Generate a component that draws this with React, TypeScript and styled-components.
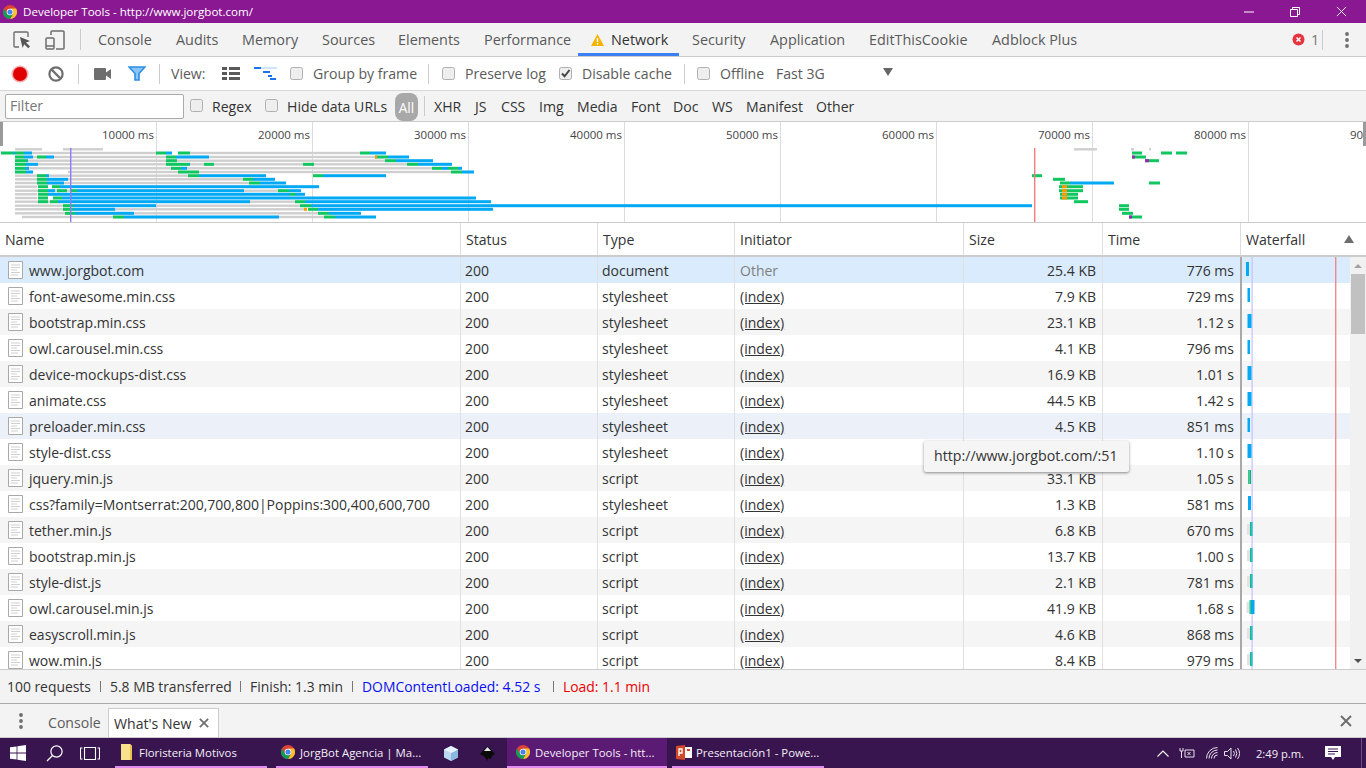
import React from "react";
import styled, { createGlobalStyle } from "styled-components";

const Global = createGlobalStyle`
  html, body { margin: 0; padding: 0; height: 100%; overflow: hidden; background: #f3f3f3; }
  * { box-sizing: border-box; }
  body { font-family: "Open Sans", "Noto Sans", Arial, sans-serif; font-size: 14px; color: #333; }
`;

const COLS = "461px 137px 137px 229px 139px 138px 1fr";

const Page = styled.div`
  width: 1366px; height: 768px; display: flex; flex-direction: column; overflow: hidden; position: relative;
`;
const TitleBar = styled.div`
  height: 23px; flex: none; background: #8a1892; color: #fff; display: flex; align-items: center;
  padding: 0 2px 0 3px; font-size: 11.6px; gap: 6px;
`;
const TitleText = styled.span` flex: 1; letter-spacing: -0.02px; `;
const WinButton = styled.div`
  width: 46px; height: 23px; margin-left: -6px; display: flex; align-items: center; justify-content: center;
`;
const TabBar = styled.div`
  height: 34px; flex: none; background: #f3f3f3; border-bottom: 1px solid #ccc; display: flex; align-items: center;
`;
const IconSlot = styled.div<{ $w: number }>`
  width: ${p => p.$w}px; flex: none; display: flex; align-items: center; justify-content: center; height: 100%;
`;
const VDivider = styled.div<{ $h?: number; $c?: string }>`
  width: 1px; height: ${p => p.$h ?? 20}px; background: ${p => p.$c ?? "#ccc"}; flex: none;
`;
const Tab = styled.div<{ $w: number; $active?: boolean }>`
  width: ${p => p.$w}px; flex: none; height: 33px; display: flex; align-items: center; gap: 7px; padding-left: 13px;
  font-size: 14.4px; color: ${p => (p.$active ? "#333" : "#5a5a5a")}; white-space: nowrap;
  border-bottom: ${p => (p.$active ? "3px solid #3a80f0" : "0")}; padding-top: ${p => (p.$active ? "3px" : "0")};
`;
const Grow = styled.div` flex: 1; `;
const ErrBadge = styled.div`
  display: flex; align-items: center; gap: 6px; font-size: 14.4px; color: #777; width: 30px; flex: none;
`;
const Toolbar = styled.div`
  height: 34px; flex: none; background: #fff; border-bottom: 1px solid #d6d6d6; display: flex; align-items: center;
`;
const ToolItem = styled.div<{ $w: number; $ml?: number }>`
  width: ${p => p.$w}px; margin-left: ${p => p.$ml ?? 0}px; flex: none; display: flex; align-items: center; gap: 10px;
  font-size: 14.1px; color: #5a5a5a; white-space: nowrap;
`;
const Check = styled.span`
  width: 13px; height: 13px; flex: none; border: 1px solid #b0b0b0; border-radius: 2.5px; background: #eeeeee;
  display: inline-flex; align-items: center; justify-content: center; margin-top: -1px;
`;
const FilterBar = styled.div`
  height: 31px; flex: none; background: #f3f3f3; border-bottom: 1px solid #ccc; display: flex; align-items: center; padding-left: 5px;
`;
const FilterInput = styled.div`
  width: 179px; height: 25px; background: #fff; border: 1px solid #aaa; border-radius: 2px; color: #777;
  font-size: 14.1px; padding-left: 4px; line-height: 22px; flex: none;
`;
const FilterCheck = styled.div<{ $w: number; $ml: number }>`
  width: ${p => p.$w}px; margin-left: ${p => p.$ml}px; flex: none; display: flex; align-items: center; gap: 9px;
  font-size: 14.1px; color: #333; white-space: nowrap;
`;
const AllPill = styled.div`
  width: 23px; height: 28px; margin-left: 8px; background: #a8a8a8; color: #fff; border-radius: 8px; display: flex;
  align-items: center; justify-content: center; font-size: 13.7px; flex: none; align-self: flex-end;
`;
const TypeChip = styled.div<{ $w: number }>`
  width: ${p => p.$w}px; flex: none; font-size: 14.1px; color: #333; white-space: nowrap; padding-top: 1px;
`;
const Overview = styled.div`
  height: 101px; flex: none; background: #fff; position: relative; overflow: hidden; border-bottom: 1px solid #ccc; display: flex; padding-left: 1px;
`;
const TickCell = styled.div`
  width: 156px; flex: none; border-right: 1px solid #ddd; text-align: right; padding: 5px 2px 0 0; font-size: 11.5px; color: #444;
  white-space: nowrap;
`;
const Handle = styled.div<{ $right?: boolean }>`
  position: absolute; top: 0; width: 3px; height: 24px; background: #9a9a9a;
  ${p => (p.$right ? "right: 0;" : "left: 0;")}
`;
const OverviewChart = styled.svg` position: absolute; left: 0; top: 0; `;
const HeaderRow = styled.div`
  height: 34px; flex: none; display: grid; grid-template-columns: ${COLS}; background: #fff; border-bottom: 2px solid #ccc;
`;
const HeadCell = styled.div<{ $last?: boolean }>`
  display: flex; align-items: center; justify-content: space-between; padding: 0 12px 0 5px; font-size: 14.1px; color: #333;
  border-right: ${p => (p.$last ? "0" : "1px solid #ddd")};
`;
const Table = styled.div`
  height: 412px; flex: none; display: flex; background: #fff;
`;
const RowsArea = styled.div`
  width: 1350px; flex: none; overflow: hidden; position: relative;
`;
const Row = styled.div<{ $bg: string }>`
  height: 26px; display: grid; grid-template-columns: ${COLS}; background: ${p => p.$bg};
`;
const Cell = styled.div<{ $right?: boolean; $last?: boolean; $muted?: boolean; $link?: boolean }>`
  display: flex; align-items: center; justify-content: ${p => (p.$right ? "flex-end" : "flex-start")};
  padding: 0 6px 0 ${p => (p.$link || p.$muted ? 5 : 4)}px;
  font-size: 14px; color: ${p => (p.$muted ? "#808080" : "#333")}; white-space: nowrap; overflow: hidden;
  border-right: ${p => (p.$last ? "0" : "1px solid #e0e0e0")};
  text-decoration: ${p => (p.$link ? "underline" : "none")};
`;
const NameCell = styled(Cell)` gap: 6px; padding-left: 8px; `;
const WaterfallSvg = styled.svg` position: absolute; left: 1240px; top: 0; `;
const Scrollbar = styled.div`
  width: 16px; flex: none; background: #f1f1f1; display: flex; flex-direction: column; align-items: center; justify-content: space-between;
  position: relative; padding: 7px 0 6px;
`;
const Thumb = styled.div`
  position: absolute; top: 17px; left: 1px; width: 14px; height: 60px; background: #c1c1c1;
`;
const Arrow = styled.div<{ $down?: boolean }>`
  width: 0; height: 0; border-left: 4px solid transparent; border-right: 4px solid transparent;
  ${p => (p.$down ? "border-top: 4px solid #505050;" : "border-bottom: 4px solid #a3a3a3;")}
`;
const Tooltip = styled.div`
  position: absolute; left: 924px; top: 441px; width: 205px; height: 31px; background: #f5f5f5; border-radius: 2px;
  box-shadow: 0 1px 3px rgba(0,0,0,.45); color: #333; font-size: 14.2px; padding-left: 10px; line-height: 30px; white-space: nowrap;
`;
const StatusBar = styled.div`
  height: 35px; flex: none; background: #f3f3f3; border-top: 1px solid #ccc; border-bottom: 1px solid #aaa; display: flex;
  align-items: center; padding-left: 7px; font-size: 13.9px; color: #333;
`;
const StatusText = styled.span<{ $w: number; $c?: string }>`
  width: ${p => p.$w}px; flex: none; color: ${p => p.$c ?? "#333"}; white-space: nowrap;
`;
const Sep = styled.span`
  width: 1px; height: 11px; background: #777; flex: none; margin-right: 9px;
`;
const Drawer = styled.div`
  height: 34px; flex: none; background: #f3f3f3; border-bottom: 1px solid #ccc; display: flex; align-items: flex-end;
`;
const DrawerTab = styled.div<{ $active?: boolean; $w: number }>`
  width: ${p => p.$w}px; flex: none; height: 29px; display: flex; align-items: center; padding-left: ${p => (p.$active ? 5 : 6)}px; gap: 8px;
  font-size: 14.1px; white-space: nowrap;
  background: ${p => (p.$active ? "#fff" : "transparent")}; color: ${p => (p.$active ? "#333" : "#5a5a5a")};
  border: ${p => (p.$active ? "1px solid #ccc" : "0")}; border-bottom: 0;
`;
const DrawerClose = styled.div`
  width: 40px; flex: none; height: 33px; display: flex; align-items: center; justify-content: center;
`;
const Taskbar = styled.div`
  height: 30px; flex: none; background: #38154f; color: #fff; display: flex; align-items: center; font-size: 11.4px;
`;
const TaskItem = styled.div<{ $w: number; $ml: number; $pl?: number; $gap?: number; $active?: boolean }>`
  width: ${p => p.$w}px; margin-left: ${p => p.$ml}px; flex: none; height: 30px; display: flex; align-items: center;
  gap: ${p => p.$gap ?? 5}px; padding-left: ${p => p.$pl ?? 5}px;
  background: ${p => (p.$active ? "#5b1a74" : "transparent")}; border-bottom: 2px solid #e28cef; white-space: nowrap; overflow: hidden; color: #f4eef6;
`;
const TrayIcon = styled.div<{ $w: number; $ml?: number }>`
  width: ${p => p.$w}px; margin-left: ${p => p.$ml ?? 0}px; flex: none; height: 30px; display: flex; align-items: center; justify-content: center;
`;
const Clock = styled.div`
  width: 62px; margin-left: 7px; flex: none; text-align: center; font-size: 11.2px; color: #f4eef6; white-space: nowrap;
`;
const TaskEdge = styled.div`
  width: 5px; height: 30px; margin-left: 12px; flex: none; border-left: 1px solid #6a4a80;
`;

const Chrome = ({ s = 14 }: { s?: number }) => (
  <svg width={s} height={s} viewBox="0 0 24 24" style={{ flex: "none" }}>
    <circle cx="12" cy="12" r="12" fill="#db4437" />
    <path d="M12 24a12 12 0 0 0 10.4-18H12l5.2 9z" fill="#fbc02d" />
    <path d="M12 24l5.2-9L12 18a6 6 0 0 1-5.2-3L1.6 6A12 12 0 0 0 12 24z" fill="#0f9d58" />
    <circle cx="12" cy="12" r="5.6" fill="#fff" />
    <circle cx="12" cy="12" r="4.4" fill="#4285f4" />
  </svg>
);
const PageIcon = () => (
  <svg width="15" height="18" viewBox="0 0 15 18" style={{ flex: "none" }}>
    <path d="M.5.5h14v17H.5z" fill="#fff" stroke="#a9a9a9" />
    <path d="M3 4h9M3 6.5h9M3 9h6M3 11.5h9M3 14h7" stroke="#cfcfcf" strokeWidth="1.2" />
  </svg>
);
const CheckMark = () => (
  <svg width="11" height="11" viewBox="0 0 11 11"><path d="M2 5.5l2.6 2.8L9.5 2" fill="none" stroke="#444" strokeWidth="2" /></svg>
);
const CloseX = ({ s = 12, c = "#6e6e6e", w = 2 }: { s?: number; c?: string; w?: number }) => (
  <svg width={s} height={s} viewBox="0 0 12 12"><path d="M1 1l10 10M11 1L1 11" stroke={c} strokeWidth={w} /></svg>
);
const Dots = () => (
  <svg width="4" height="16" viewBox="0 0 4 16" fill="#6e6e6e"><circle cx="2" cy="2" r="1.9" /><circle cx="2" cy="8" r="1.9" /><circle cx="2" cy="14" r="1.9" /></svg>
);

const TABS: [string, number][] = [
  ["Console", 78], ["Audits", 66], ["Memory", 80], ["Sources", 76], ["Elements", 86], ["Performance", 107],
];
const TABS2: [string, number][] = [
  ["Security", 78], ["Application", 99], ["EditThisCookie", 123], ["Adblock Plus", 140],
];
const TYPES: [string, number][] = [
  ["XHR", 41], ["JS", 26], ["CSS", 38], ["Img", 38], ["Media", 54], ["Font", 42], ["Doc", 39], ["WS", 34], ["Manifest", 70], ["Other", 50],
];
const ROWS: [string, string, string, string, string][] = [
  ["www.jorgbot.com", "document", "Other", "25.4 KB", "776 ms"],
  ["font-awesome.min.css", "stylesheet", "(index)", "7.9 KB", "729 ms"],
  ["bootstrap.min.css", "stylesheet", "(index)", "23.1 KB", "1.12 s"],
  ["owl.carousel.min.css", "stylesheet", "(index)", "4.1 KB", "796 ms"],
  ["device-mockups-dist.css", "stylesheet", "(index)", "16.9 KB", "1.01 s"],
  ["animate.css", "stylesheet", "(index)", "44.5 KB", "1.42 s"],
  ["preloader.min.css", "stylesheet", "(index)", "4.5 KB", "851 ms"],
  ["style-dist.css", "stylesheet", "(index)", "", "1.10 s"],
  ["jquery.min.js", "script", "(index)", "33.1 KB", "1.05 s"],
  ["css?family=Montserrat:200,700,800|Poppins:300,400,600,700", "stylesheet", "(index)", "1.3 KB", "581 ms"],
  ["tether.min.js", "script", "(index)", "6.8 KB", "670 ms"],
  ["bootstrap.min.js", "script", "(index)", "13.7 KB", "1.00 s"],
  ["style-dist.js", "script", "(index)", "2.1 KB", "781 ms"],
  ["owl.carousel.min.js", "script", "(index)", "41.9 KB", "1.68 s"],
  ["easyscroll.min.js", "script", "(index)", "4.6 KB", "868 ms"],
  ["wow.min.js", "script", "(index)", "8.4 KB", "979 ms"],
];
const rowBg = (i: number) =>
  i === 0 ? "#d9ebfc" : i === 6 ? "#ecf1f9" : i % 2 === 0 ? "#f5f5f5" : "#ffffff";

const OV: [number, string][] = [
  [149.3, "a15-42 a63-103 a1074-1097 a1131-1134 a1149-1151"],
  [153, "g1-13 b13-15 a15-156 g15-24 b24-32 g156-166 b166-172 g178-190 a190-360 g360-370 b370-386 g1132-1142 g1161-1172 g1176-1187"],
  [157, "a15-375 g15-24 b24-33 g37-46 b46-54 g166-176 b176-209 g375-388 o375-377 b388-409 g1132-1146 p1132-1135"],
  [160.7, "a15-385 g15-27 b27-28 g166-177 g385-396 b396-433 g1145-1159 p1145-1149"],
  [164.3, "a15-407 g15-26 b26-38 g166-178 g178-189 b189-190 g204-214 g303-314 g407-418 b418-452"],
  [168.3, "a15-432 g15-25 b25-29 g171-181 b181-187 g432-442 b442-448 g448-458 b458-462"],
  [172, "a68-451 g15-26 b26-33 g178-188 g188-199 g451-462 b462-474"],
  [175.7, "a15-188 g37-46 b46-49 g188-199 b199-266 g313-323 b323-386 g1032-1042"],
  [179.3, "a15-243 g37-47 b47-68 g243-253 b253-275 g1053-1065"],
  [183, "a15-249 g37-47 b47-64 g249-260 b260-286 g1060-1070 b1070-1114 g1149-1160"],
  [186.7, "a15-37 g38-48 g52-60 b60-319 g1059-1083 o1062-1067"],
  [190.7, "a15-278 g38-48 b48-55 g57-67 g70-77 b77-244 g278-289 b289-301 g1059-1083 o1062-1067"],
  [194.3, "a15-37 g38-48 b48-290 g290-295 b295-305 g1060-1078 o1062-1067"],
  [198, "a15-37 g38-48 g53-62 b62-476 g1060-1078 o1062-1067"],
  [201.7, "a15-295 g38-48 g50-58 b58-250 g295-305 b305-491 g1074-1088"],
  [205.7, "a15-300 g63-73 b73-156 g300-311 b311-1032 g1119-1129"],
  [209.3, "a15-304 g63-73 b73-115 o304-307 g308-318 b318-493 g1119-1129"],
  [213.3, "a15-318 g65-75 b75-134 g318-329 b329-361 g1122-1133"],
  [217, "a22-324 g113-124 b124-279 g324-335 b335-376 g1129-1142 p1129-1132"],
];
const OV_COL: Record<string, string> = { a: "#cfcfcf", g: "#0fc65f", b: "#03a9f4", o: "#ff9800", p: "#9c27b0" };

const WF: [number, number, string?][] = [
  [6, 3], [7.5, 2.5], [7.5, 4], [7.5, 2.5], [7.5, 4], [7.5, 4], [7.5, 2.5], [7.5, 4], [8, 3, "m"], [8, 3],
  [10, 2.5, "g"], [10, 2.5, "g"], [10, 2.5, "g"], [9.5, 5, "g"], [10, 2.5, "g"], [10, 2.5, "g"],
];

export default function App() {
  return (
    <Page>
      <Global />
      <TitleBar>
        <Chrome />
        <TitleText>Developer Tools - http://www.jorgbot.com/</TitleText>
        <WinButton><svg width="10" height="2"><path d="M0 1h10" stroke="#fff" /></svg></WinButton>
        <WinButton><svg width="10" height="10" fill="none" stroke="#fff"><path d="M.5 2.5h7v7h-7zM2.5 2.5v-2h7v7h-2" /></svg></WinButton>
        <WinButton><CloseX s={11} c="#fff" w={1} /></WinButton>
      </TitleBar>
      <TabBar>
        <IconSlot $w={39}>
          <svg width="19" height="18" viewBox="0 0 19 18" style={{ marginLeft: 5 }}>
            <path d="M6 16H2a1 1 0 0 1-1-1V2a1 1 0 0 1 1-1h12a1 1 0 0 1 1 1v4" fill="none" stroke="#6e6e6e" strokeWidth="1.4" />
            <path d="M7 6l10 4-4 1.4 4 4-1.8 1.8-4-4L9.6 17z" fill="#555" />
          </svg>
        </IconSlot>
        <IconSlot $w={31}>
          <svg width="20" height="20" viewBox="0 0 20 20" fill="none" stroke="#6e6e6e" strokeWidth="1.5">
            <path d="M6 5V2a1 1 0 0 1 1-1h11a1 1 0 0 1 1 1v16a1 1 0 0 1-1 1H11" />
            <rect x="1" y="8" width="8" height="11" rx="1" />
            <path d="M1 16h8" />
          </svg>
        </IconSlot>
        <IconSlot $w={15}><VDivider $h={21} style={{ marginLeft: 6 }} /></IconSlot>
        {TABS.map(([t, w]) => <Tab key={t} $w={w}>{t}</Tab>)}
        <Tab $w={101} $active>
          <svg width="13" height="12" viewBox="0 0 13 12" style={{ flex: "none" }}><path d="M6.5 0L13 12H0z" fill="#f4b400" /><path d="M6.5 4v4M6.5 9v1.6" stroke="#fff" strokeWidth="1.4" /></svg>
          Network
        </Tab>
        {TABS2.map(([t, w]) => <Tab key={t} $w={w}>{t}</Tab>)}
        <Grow />
        <ErrBadge>
          <svg width="13" height="13" viewBox="0 0 13 13" style={{ flex: "none" }}><circle cx="6.5" cy="6.5" r="6" fill="#e5343f" /><path d="M4.5 4.5l4 4M8.5 4.5l-4 4" stroke="#fff" strokeWidth="1.5" /></svg>
          1
        </ErrBadge>
        <VDivider $h={20} style={{ marginRight: 5 }} />
        <IconSlot $w={38}><Dots /></IconSlot>
      </TabBar>
      <Toolbar>
        <IconSlot $w={40}>
          <svg width="18" height="18" viewBox="0 0 18 18"><circle cx="9" cy="9" r="8.6" fill="#f3b0b0" /><circle cx="9" cy="9" r="7" fill="#e00000" /></svg>
        </IconSlot>
        <IconSlot $w={32}>
          <svg width="16" height="16" viewBox="0 0 16 16" fill="none" stroke="#6e6e6e" strokeWidth="2.2"><circle cx="8" cy="8" r="6.6" /><path d="M3.4 3.4l9.2 9.2" /></svg>
        </IconSlot>
        <IconSlot $w={12}><VDivider $h={20} /></IconSlot>
        <IconSlot $w={36}>
          <svg width="17" height="12" viewBox="0 0 17 12" fill="#6e6e6e"><rect x="0" y="0" width="12" height="12" rx="1" /><path d="M12 4.5L17 1v10l-5-3.5z" /></svg>
        </IconSlot>
        <IconSlot $w={34}>
          <svg width="18" height="15" viewBox="0 0 18 15"><path d="M1 1h16l-6 6.5V14H7V7.5z" fill="#8cc4f5" stroke="#2a8fe8" strokeWidth="1.6" /></svg>
        </IconSlot>
        <IconSlot $w={10}><VDivider $h={20} /></IconSlot>
        <ToolItem $w={50} $ml={7}>View:</ToolItem>
        <IconSlot $w={19}>
          <svg width="18" height="13" viewBox="0 0 18 13" fill="#5a5a5a"><path d="M0 0h5v3H0zM7 0h11v3H7zM0 5h5v3H0zM7 5h11v3H7zM0 10h5v3H0zM7 10h11v3H7z" /></svg>
        </IconSlot>
        <IconSlot $w={50}>
          <svg width="23" height="13" viewBox="0 0 23 13"><path d="M0 0h23v2H0z" fill="#cfe3fa" /><path d="M0 0h7v2H0zM9 4h7v2H9zM14 8h4v2h-4zM16 11h6v2h-6z" fill="#1a73e8" /></svg>
        </IconSlot>
        <ToolItem $w={138}><Check />Group by frame</ToolItem>
        <VDivider $h={20} />
        <ToolItem $w={117} $ml={13}><Check />Preserve log</ToolItem>
        <ToolItem $w={125}><Check><CheckMark /></Check>Disable cache</ToolItem>
        <VDivider $h={20} />
        <ToolItem $w={79} $ml={12}><Check />Offline</ToolItem>
        <ToolItem $w={107}>Fast 3G</ToolItem>
        <svg width="10" height="8" viewBox="0 0 10 8" style={{ marginTop: -3 }}><path d="M0 0h10L5 8z" fill="#666" /></svg>
      </Toolbar>
      <FilterBar>
        <FilterInput>Filter</FilterInput>
        <FilterCheck $w={75} $ml={6}><Check />Regex</FilterCheck>
        <FilterCheck $w={122} $ml={0}><Check />Hide data URLs</FilterCheck>
        <AllPill>All</AllPill>
        <VDivider $h={20} style={{ marginLeft: 6, marginRight: 9 }} />
        {TYPES.map(([t, w]) => <TypeChip key={t} $w={w}>{t}</TypeChip>)}
      </FilterBar>
      <Overview>
        {[1, 2, 3, 4, 5, 6, 7, 8, 9].map(n => <TickCell key={n}>{n}0000 ms</TickCell>)}
        <OverviewChart width="1366" height="100" viewBox="0 122 1366 100">
          {OV.flatMap(([y, s], i) =>
            s.split(" ").map((seg, j) => {
              const k = seg[0];
              const [a, b] = seg.slice(1).split("-").map(Number);
              const h = k === "a" ? 2.4 : 3;
              return <rect key={`${i}-${j}`} x={a} y={y - h / 2} width={b - a} height={h} fill={OV_COL[k]} />;
            })
          )}
          <rect x="70" y="148" width="1.4" height="74" fill="#8a7bff" />
          <rect x="1034" y="148" width="1.4" height="74" fill="#f47c7c" />
        </OverviewChart>
        <Handle />
        <Handle $right />
      </Overview>
      <HeaderRow>
        {["Name", "Status", "Type", "Initiator", "Size", "Time"].map(h => <HeadCell key={h}>{h}</HeadCell>)}
        <HeadCell $last>
          Waterfall
          <svg width="10" height="8" viewBox="0 0 10 8"><path d="M5 0l5 8H0z" fill="#6e6e6e" /></svg>
        </HeadCell>
      </HeaderRow>
      <Table>
        <RowsArea>
          {ROWS.map((r, i) => (
            <Row key={r[0]} $bg={rowBg(i)}>
              <NameCell><PageIcon />{r[0]}</NameCell>
              <Cell>200</Cell>
              <Cell>{r[1]}</Cell>
              <Cell $muted={r[2] === "Other"} $link={r[2] !== "Other"}>{r[2]}</Cell>
              <Cell $right>{r[3]}</Cell>
              <Cell $right>{r[4]}</Cell>
              <Cell $last />
            </Row>
          ))}
          <WaterfallSvg width="110" height="412" viewBox="0 0 110 412">
            <rect x="0" y="0" width="2" height="412" fill="#a9a9a9" />
            <rect x="11.5" y="0" width="1.2" height="412" fill="#c3c0ff" />
            <rect x="95" y="0" width="1.4" height="412" fill="#f08a8a" />
            {WF.map(([x, w, kind], i) => {
              const y = i * 26 + 5;
              if (kind === "g") {
                return (
                  <g key={i}>
                    <rect x={x - 3} y={y + 2} width="3" height="11" fill="#e2e2e2" />
                    <rect x={x} y={y} width="1.3" height="14" fill="#0fc65f" />
                    <rect x={x + 1.3} y={y} width={w - 1.3} height="14" fill="#03a9f4" />
                  </g>
                );
              }
              if (kind === "m") {
                return (
                  <g key={i}>
                    <rect x={x} y={y} width="1.5" height="14" fill="#2ec98a" />
                    <rect x={x + 1.5} y={y} width={w - 1.5} height="14" fill="#10b070" />
                  </g>
                );
              }
              return <rect key={i} x={x} y={y} width={w} height="14" fill="#03a9f4" />;
            })}
          </WaterfallSvg>
        </RowsArea>
        <Scrollbar>
          <Arrow />
          <Thumb />
          <Arrow $down />
        </Scrollbar>
      </Table>
      <Tooltip>http://www.jorgbot.com/:51</Tooltip>
      <StatusBar>
        <StatusText $w={93}>100 requests</StatusText>
        <Sep />
        <StatusText $w={130}>5.8 MB transferred</StatusText>
        <Sep />
        <StatusText $w={102}>Finish: 1.3 min</StatusText>
        <Sep />
        <StatusText $w={191} $c="#0a10f0">DOMContentLoaded: 4.52 s</StatusText>
        <Sep />
        <StatusText $w={100} $c="#ee0000">Load: 1.1 min</StatusText>
      </StatusBar>
      <Drawer>
        <IconSlot $w={42}><Dots /></IconSlot>
        <DrawerTab $w={66}>Console</DrawerTab>
        <DrawerTab $w={111} $active>What's New<CloseX s={10} /></DrawerTab>
        <Grow />
        <DrawerClose><CloseX s={12} /></DrawerClose>
      </Drawer>
      <Taskbar>
        <IconSlot $w={36}>
          <svg width="16" height="16" viewBox="0 0 16 16" fill="#fff"><path d="M0 2.3l6.6-.9v6.1H0zM7.4 1.3L16 0v7.5H7.4zM0 8.4h6.6v6.2L0 13.7zM7.4 8.4H16V16l-8.6-1.2z" /></svg>
        </IconSlot>
        <IconSlot $w={36}>
          <svg width="17" height="17" viewBox="0 0 17 17" fill="none" stroke="#fff" strokeWidth="1.2"><circle cx="10.5" cy="6.5" r="5.6" /><path d="M6.5 10.5L1 16" /></svg>
        </IconSlot>
        <IconSlot $w={36}>
          <svg width="20" height="13" viewBox="0 0 20 13" fill="none" stroke="#fff" strokeWidth="1.1"><path d="M4.5.5h11v12h-11zM2.500 1H.5v11h2M17.500 1h2v11h-2" /></svg>
        </IconSlot>
        <TaskItem $w={152} $ml={7}>
          <svg width="14" height="16" viewBox="0 0 14 16" style={{ flex: "none" }}><path d="M1 0h9l2 2v14H1z" fill="#f9e08b" /><path d="M10 0v16h2V2z" fill="#e9c54e" /></svg>
          Floristeria Motivos
        </TaskItem>
        <TaskItem $w={152} $ml={9}><Chrome />JorgBot Agencia | Ma...</TaskItem>
        <IconSlot $w={36} style={{ marginLeft: 5 }}>
          <svg width="14" height="15" viewBox="0 0 14 15"><path d="M7 0l7 3.500v8L7 15 0 11.500v-8z" fill="#bcd9f2" /><path d="M7 7l7-3.500v8L7 15z" fill="#8ab8e0" /><path d="M0 3.500L7 0l7 3.500L7 7z" fill="#e6f2fb" /></svg>
        </IconSlot>
        <IconSlot $w={36}>
          <svg width="15" height="15" viewBox="0 0 15 15"><path d="M7.500 0L15 8l-3 2-1 3-3-1-1 3-2-4-5-3z" fill="#0a0a0a" /><path d="M7.500 1L11 5H4z" fill="#e8e8e8" /></svg>
        </IconSlot>
        <TaskItem $w={160} $ml={2} $pl={9} $active><Chrome />Developer Tools - htt...</TaskItem>
        <TaskItem $w={152} $ml={5} $pl={4} $gap={4}>
          <svg width="16" height="15" viewBox="0 0 16 15" style={{ flex: "none" }}><path d="M6 2h10v11H6z" fill="#fff" /><path d="M0 1l9-1v15l-9-1z" fill="#d2492a" /><path d="M3 4h3v4H3zM3 8v3" fill="none" stroke="#fff" strokeWidth="1.3" /><path d="M11 4h3v2h-3z" fill="#d2492a" /></svg>
          Presentación1 - Powe...
        </TaskItem>
        <Grow />
        <TrayIcon $w={18}><svg width="12" height="7" viewBox="0 0 12 7" fill="none" stroke="#fff" strokeWidth="1.1"><path d="M.5 6.500L6 1l5.500 5.500" /></svg></TrayIcon>
        <TrayIcon $w={30}>
          <svg width="16" height="12" viewBox="0 0 16 12" fill="none" stroke="#e8e0ec"><path d="M1 1v3h3V1M2.500 4v7M6 3h9v7H6zM8.500 5l3 3M11.500 5l-3 3" /></svg>
        </TrayIcon>
        <TrayIcon $w={20}>
          <svg width="13" height="12" viewBox="0 0 13 12" fill="none" stroke="#e8e0ec"><path d="M.5 11.500a11 11 0 0 1 11-11M3 11.500a8.500 8.500 0 0 1 8.500-8.500M5.500 11.500a6 6 0 0 1 6-6M8 11.500a3.500 3.500 0 0 1 3.500-3.500" /></svg>
        </TrayIcon>
        <TrayIcon $w={20}>
          <svg width="16" height="13" viewBox="0 0 16 13" fill="none" stroke="#e8e0ec"><path d="M.5 4.500h3L7 1v11L3.500 8.500h-3zM9.500 4a4 4 0 0 1 0 5M11.500 2.500a7 7 0 0 1 0 8M13.500 1a9 9 0 0 1 0 11" /></svg>
        </TrayIcon>
        <Clock>2:49 p.m.</Clock>
        <TrayIcon $w={32} $ml={6}>
          <svg width="16" height="14" viewBox="0 0 16 14"><path d="M0 0h16v11h-6l-2 3-2-3H0z" fill="#fff" /><path d="M3 3h10M3 5.500h10M3 8h7" stroke="#38154f" /></svg>
        </TrayIcon>
        <TaskEdge />
      </Taskbar>
    </Page>
  );
}
